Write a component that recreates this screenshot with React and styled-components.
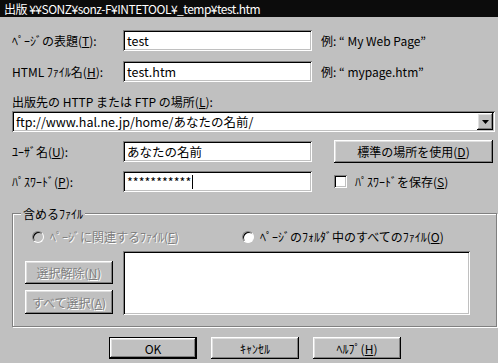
import React from 'react';
import styled, { createGlobalStyle } from 'styled-components';

const GlobalStyle = createGlobalStyle`
  html, body {
    margin: 0;
    padding: 0;
    background: #c0c0c0;
  }
  * {
    box-sizing: border-box;
  }
`;

const Window = styled.div`
  width: 498px;
  height: 363px;
  background: #c0c0c0;
  overflow: hidden;
  font-family: "Noto Sans CJK JP", "DejaVu Sans", sans-serif;
  font-size: 12px;
  color: #000;
`;

const TitleBar = styled.div`
  height: 17px;
  line-height: 17px;
  padding-left: 4px;
  background: #0c0c0c;
  color: #fff;
  font-size: 12px;
  letter-spacing: -0.5px;
  white-space: nowrap;
`;

const Content = styled.div`
  padding: 13px 0 0 12px;
`;

const Row = styled.div`
  display: flex;
  align-items: center;
  height: ${(p) => p.$h || 21}px;
  margin-top: ${(p) => p.$mt || 0}px;
`;

const Label = styled.div`
  width: 111px;
  white-space: nowrap;
  line-height: 1;
`;

const Sunken = styled.div`
  background: #fff;
  box-shadow: inset 1px 1px #808080, inset -1px -1px #fff,
    inset 2px 2px #000, inset -2px -2px #c0c0c0;
`;

const TextField = styled(Sunken)`
  width: 189px;
  height: 21px;
  padding-left: 4px;
  display: flex;
  align-items: center;
  font-size: 12.5px;
  white-space: nowrap;
`;

const Caret = styled.span`
  display: inline-block;
  width: 1px;
  height: 14px;
  background: #000;
  margin-left: 1px;
`;

const Hint = styled.div`
  margin-left: 9px;
  white-space: nowrap;
`;

const PlainLabel = styled.div`
  height: 19px;
  margin-top: 10px;
  line-height: 19px;
  white-space: nowrap;
`;

const Combo = styled(Sunken)`
  width: 483px;
  height: 21px;
  display: flex;
  align-items: center;
  padding: 2px 2px 2px 4px;
  font-size: 12.5px;
`;

const ComboText = styled.div`
  flex: 1;
  white-space: nowrap;
`;

const Raised = styled.div`
  background: #c0c0c0;
  box-shadow: inset -1px -1px #000, inset 1px 1px #fff,
    inset -2px -2px #808080, inset 2px 2px #dfdfdf;
`;

const DropButton = styled(Raised)`
  width: 16px;
  height: 17px;
  display: flex;
  align-items: center;
  justify-content: center;
`;

const Button = styled(Raised)`
  width: ${(p) => p.$w || 88}px;
  height: ${(p) => p.$h || 23}px;
  margin-left: ${(p) => p.$ml || 0}px;
  display: flex;
  align-items: center;
  justify-content: center;
  white-space: nowrap;
  color: ${(p) => (p.$disabled ? '#808080' : '#000')};
  text-shadow: ${(p) => (p.$disabled ? '1px 1px #fff' : 'none')};
`;

const DefaultButton = styled(Button)`
  box-shadow: inset 0 0 0 1px #000, inset -2px -2px #000, inset 2px 2px #fff,
    inset -3px -3px #808080, inset 3px 3px #dfdfdf;
`;

const Check = styled(Sunken)`
  width: 13px;
  height: 13px;
  margin-left: 22px;
`;

const CheckLabel = styled.div`
  margin-left: 8px;
  white-space: nowrap;
`;

const Group = styled.div`
  position: relative;
  width: 485px;
  height: 114px;
  margin-top: 21px;
  border: 1px solid #808080;
  box-shadow: inset 1px 1px #fff, 1px 1px #fff;
  padding: 16px 0 0 19px;
`;

const Legend = styled.div`
  position: absolute;
  top: -8px;
  left: 8px;
  padding: 0 2px;
  background: #c0c0c0;
  line-height: 15px;
  white-space: nowrap;
`;

const RadioRow = styled.div`
  display: flex;
  align-items: center;
  height: 13px;
`;

const RadioItem = styled.div`
  display: flex;
  align-items: center;
  width: ${(p) => p.$w || 'auto'};
  white-space: nowrap;
  color: ${(p) => (p.$disabled ? '#808080' : '#000')};
  text-shadow: ${(p) => (p.$disabled ? '1px 1px #fff' : 'none')};
`;

const RadioDot = styled.div`
  width: 12px;
  height: 12px;
  border-radius: 50%;
  margin-right: 6px;
  background: ${(p) => (p.$disabled ? '#c0c0c0' : '#fff')};
  border: 1px solid #808080;
  border-right-color: #fff;
  border-bottom-color: #fff;
  box-shadow: inset 1px 1px #000;
`;

const FilesArea = styled.div`
  display: flex;
  margin-top: 8px;
  margin-left: -7px;
`;

const SideButtons = styled.div`
  display: flex;
  flex-direction: column;
  gap: 6px;
  padding-top: 10px;
  width: 88px;
  margin-right: 10px;
`;

const ListBox = styled(Sunken)`
  width: 347px;
  height: 64px;
`;

const Footer = styled.div`
  display: flex;
  margin-top: 10px;
  margin-left: 97px;
`;

const U = styled.span`
  text-decoration: underline;
  text-underline-offset: 1px;
`;

export default function App() {
  return (
    <Window>
      <GlobalStyle />
      <TitleBar>出版 ¥¥SONZ¥sonz-F¥INTETOOL¥_temp¥test.htm</TitleBar>
      <Content>
        <Row>
          <Label>ﾍﾟｰｼﾞの表題(<U>T</U>):</Label>
          <TextField>test</TextField>
          <Hint>例: “ My Web Page”</Hint>
        </Row>
        <Row $mt={10}>
          <Label>HTML ﾌｧｲﾙ名(<U>H</U>):</Label>
          <TextField>test.htm</TextField>
          <Hint>例: “ mypage.htm”</Hint>
        </Row>
        <PlainLabel>出版先の HTTP または FTP の場所(<U>L</U>):</PlainLabel>
        <Combo>
          <ComboText>ftp://www.hal.ne.jp/home/あなたの名前/</ComboText>
          <DropButton>
            <svg width="7" height="4" viewBox="0 0 7 4">
              <polygon points="0,0 7,0 3.5,4" fill="#000" />
            </svg>
          </DropButton>
        </Combo>
        <Row $h={23} $mt={8}>
          <Label>ﾕｰｻﾞ名(<U>U</U>):</Label>
          <TextField>あなたの名前</TextField>
          <Button $w={159} $ml={22}>
            標準の場所を使用(<U>D</U>)
          </Button>
        </Row>
        <Row $mt={8}>
          <Label>ﾊﾟｽﾜｰﾄﾞ(<U>P</U>):</Label>
          <TextField>
            ***********
            <Caret />
          </TextField>
          <Check />
          <CheckLabel>
            ﾊﾟｽﾜｰﾄﾞを保存(<U>S</U>)
          </CheckLabel>
        </Row>
        <Group>
          <Legend>含めるﾌｧｲﾙ</Legend>
          <RadioRow>
            <RadioItem $w="210px" $disabled>
              <RadioDot $disabled />
              ﾍﾟｰｼﾞに関連するﾌｧｲﾙ(<U>F</U>)
            </RadioItem>
            <RadioItem>
              <RadioDot />
              ﾍﾟｰｼﾞのﾌｫﾙﾀﾞ中のすべてのﾌｧｲﾙ(<U>O</U>)
            </RadioItem>
          </RadioRow>
          <FilesArea>
            <SideButtons>
              <Button $disabled>
                選択解除(<U>N</U>)
              </Button>
              <Button $h={24} $disabled>
                すべて選択(<U>A</U>)
              </Button>
            </SideButtons>
            <ListBox />
          </FilesArea>
        </Group>
        <Footer>
          <DefaultButton $h={22}>OK</DefaultButton>
          <Button $h={22} $ml={14}>
            ｷｬﾝｾﾙ
          </Button>
          <Button $h={22} $ml={14}>
            ﾍﾙﾌﾟ(<U>H</U>)
          </Button>
        </Footer>
      </Content>
    </Window>
  );
}
